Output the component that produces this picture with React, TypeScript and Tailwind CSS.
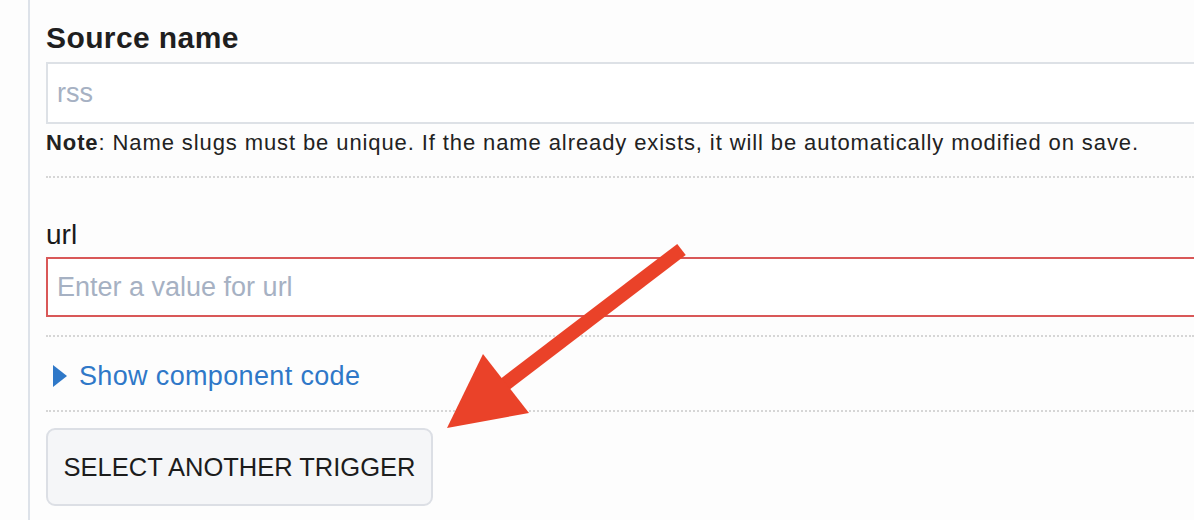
export default function App() {
  return (
    <div className="relative w-[1194px] h-[520px] overflow-hidden bg-[#fdfdfd] font-['Liberation_Sans',Arial,sans-serif] text-[#222]">
      <div className="ml-[28px] h-full border-l-2 border-[#dde2e9] pl-[16px]">
        {/* Source name */}
        <h2 className="pt-[20px] text-[30px] leading-[36px] font-bold tracking-[0.4px] text-[#1f1f1f]">Source name</h2>
        <input
          className="mt-[6px] block h-[62px] w-[1180px] border-2 border-[#dde1e6] bg-white pl-[9px] text-[27px] outline-none placeholder:text-[#a6b1c3]"
          placeholder="rss"
        />
        <p className="mt-[5px] text-[22px] leading-[28px] tracking-[0.9px] text-[#222]">
          <b>Note</b>: Name slugs must be unique. If the name already exists, it will be automatically modified on save.
        </p>
        <div className="mt-[19px] border-t-2 border-dotted border-[#d6d6d6]" />

        {/* url field */}
        <label className="mt-[41px] block text-[28px] leading-[32px] text-[#1a1a1a]">url</label>
        <input
          className="mt-[6px] block h-[60px] w-[1180px] border-2 border-[#d95858] bg-white pl-[9px] text-[27px] outline-none placeholder:text-[#a6b1c3]"
          placeholder="Enter a value for url"
        />
        <div className="mt-[18px] border-t-2 border-dotted border-[#d6d6d6]" />

        <div className="mt-[23px] flex items-center gap-[12px] text-[27px] leading-[32px] tracking-[0.35px] text-[#2f78c8]">
          <span className="ml-[7px] h-0 w-0 border-y-[11px] border-l-[14px] border-y-transparent border-l-[#2f78c8]" />
          <span>Show component code</span>
        </div>
        <div className="mt-[18px] border-t-2 border-dotted border-[#d6d6d6]" />

        <button className="mt-[16px] flex h-[78px] w-[387px] items-center justify-center rounded-[9px] border-2 border-[#dcdfe5] bg-[#f5f6f8] text-[25.5px] text-[#1c1c1c]">
          SELECT ANOTHER TRIGGER
        </button>
      </div>

      {/* annotation arrow */}
      <svg className="absolute inset-0" width="1194" height="520" viewBox="0 0 1194 520">
        <line x1="681.5" y1="249.5" x2="500" y2="388" stroke="#ea4229" strokeWidth="14" />
        <polygon points="447,428 483,354 529,413" fill="#ea4229" />
      </svg>
    </div>
  )
}
